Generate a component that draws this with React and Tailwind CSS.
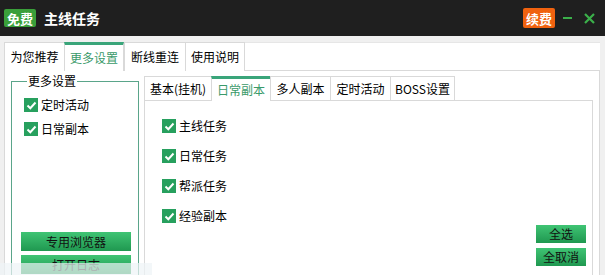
import React from "react";

const font = { fontFamily: '"Noto Sans CJK SC", "Noto Sans", sans-serif' };

function Check({ label }) {
  return (
    <div className="flex items-center h-[14px]">
      <span className="w-[14px] h-[14px] bg-[#27a05e] flex items-center justify-center">
        <svg width="11" height="11" viewBox="0 0 11 11">
          <path d="M1.5 5.5 L4.3 8.2 L9.5 2.5" stroke="#fff" strokeWidth="2" fill="none" />
        </svg>
      </span>
      <span className="text-[12px] leading-none text-black ml-[3px]">{label}</span>
    </div>
  );
}

function GreenBtn({ children, className }) {
  return (
    <div
      className={
        "flex items-center justify-center text-[12px] leading-none text-[#111] bg-gradient-to-b from-[#3fc474] to-[#1f9850] " +
        className
      }
    >
      {children}
    </div>
  );
}

export default function App() {
  const outerTabs = ["为您推荐", "更多设置", "断线重连", "使用说明"];
  const outerW = [60, 60, 61, 60];
  const innerTabs = ["基本(挂机)", "日常副本", "多人副本", "定时活动", "BOSS设置"];
  const innerW = [67, 59, 60, 60, 65];
  return (
    <div className="w-[605px] h-[275px] overflow-hidden bg-[#f0f0f0] relative" style={font}>
      {/* title bar */}
      <div className="h-[36px] bg-[#1f1f1f] flex items-center pl-[4px] pr-[10px]">
        <span className="h-[18px] w-[32px] bg-[#3a9f3a] text-white text-[13px] font-bold leading-none flex items-center justify-center rounded-[2px]">
          免费
        </span>
        <span className="ml-[8px] text-white text-[14px] font-bold leading-none">主线任务</span>
        <div className="flex-1" />
        <span className="h-[20px] w-[32px] bg-[#f0620f] text-white text-[13px] font-bold leading-none flex items-center justify-center rounded-[2px]">
          续费
        </span>
        <span className="ml-[8px] w-[9px] h-[2px] bg-[#3bb04a]" />
        <svg className="ml-[12px]" width="11" height="11" viewBox="0 0 11 11">
          <path d="M1 1 L10 10 M10 1 L1 10" stroke="#3bb04a" strokeWidth="2.2" />
        </svg>
      </div>
      {/* body */}
      <div className="pt-[6px] pl-[4px] pr-[5px]">
        <div className="flex h-[29px]">
          {outerTabs.map((t, i) => (
            <div
              key={t}
              style={{ width: outerW[i] }}
              className={
                "flex items-center justify-center text-[12px] leading-none border-l border-[#d9d9d9] " +
                (i === 1
                  ? "bg-white text-[#3a9a6a] border-t-[3px] border-t-[#3aa57a] border-r"
                  : "bg-white text-black border-t border-t-[#d9d9d9] " + (i === 3 ? "border-r" : ""))
              }
            >
              {t}
            </div>
          ))}
          <div className="flex-1 border-b border-[#d9d9d9] border-t border-t-[#e6e6e6] bg-white" />
        </div>
        <div className="bg-white border-l border-r border-[#d9d9d9] h-[220px] flex pl-[6px] pt-[5px] pr-[5px]">
          {/* group box */}
          <fieldset className="w-[128px] h-[300px] border border-[#5aa58a] mt-[-1px] pl-[9px]">
            <legend className="text-[12px] leading-none text-black ml-[6px] px-[1px]">更多设置</legend>
            <div className="flex flex-col gap-[10px] pt-[11px] pl-[3px]">
              <Check label="定时活动" />
              <Check label="日常副本" />
            </div>
            <GreenBtn className="w-[110px] h-[19px] mt-[96px]">专用浏览器</GreenBtn>
            <GreenBtn className="w-[110px] h-[19px] mt-[4px]">打开日志</GreenBtn>
          </fieldset>
          {/* inner tabs */}
          <div className="ml-[5px] w-[449px] flex flex-col">
            <div className="flex h-[25px]">
              {innerTabs.map((t, i) => (
                <div
                  key={t}
                  style={{ width: innerW[i] }}
                  className={
                    "flex items-center justify-center text-[12px] leading-none border-l border-[#d9d9d9] " +
                    (i === 1
                      ? "text-[#3a9a6a] border-t-[3px] border-t-[#3aa57a] bg-white"
                      : "text-black border-t border-t-[#d9d9d9] border-b bg-white") +
                    (i === 4 ? " border-r" : "")
                  }
                >
                  {t}
                </div>
              ))}
              <div className="flex-1 border-b border-[#d9d9d9]" />
            </div>
            <div className="flex-1 border-l border-r border-[#d9d9d9] pl-[17px] pt-[18px] pr-[6px] flex flex-col">
              <div className="flex flex-col gap-[16px]">
                <Check label="主线任务" />
                <Check label="日常任务" />
                <Check label="帮派任务" />
                <Check label="经验副本" />
              </div>
              <div className="flex flex-col items-end mt-[2px]">
                <GreenBtn className="w-[50px] h-[18px]">全选</GreenBtn>
                <GreenBtn className="w-[50px] h-[18px] mt-[5px]">全取消</GreenBtn>
              </div>
            </div>
          </div>
        </div>
      </div>
      {/* taskbar-like translucent overlay at bottom-left */}
      <div className="absolute left-0 top-[263px] w-[152px] h-[12px] bg-[#eef3f6]/70" />
    </div>
  );
}
